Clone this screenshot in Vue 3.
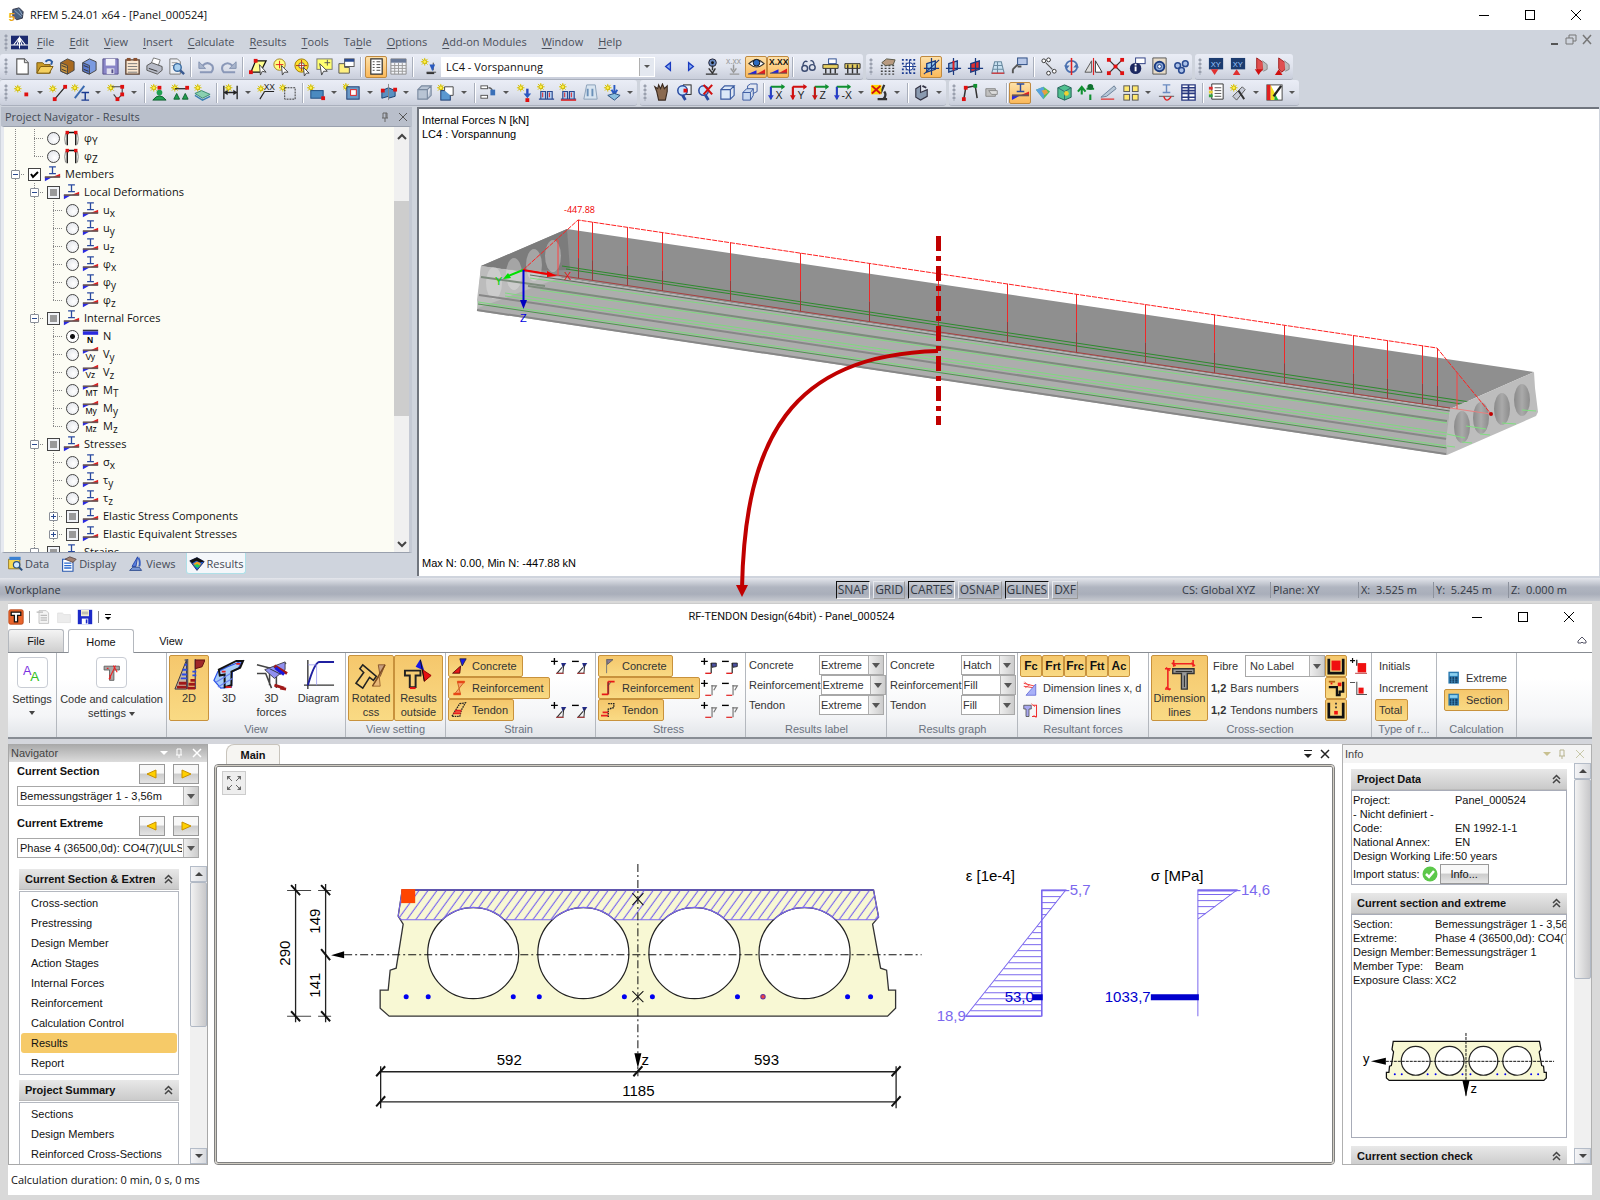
<script setup>
import { h, ref } from 'vue'

/* ---------- small drawing helpers for the icon set ---------- */
const P = (d, fill = 'none', stroke = 'none', w = 1) =>
  `<path d="${d}" fill="${fill}" stroke="${stroke}" stroke-width="${w}"/>`
const C = (x, y, r, fill, stroke = 'none', w = 1) =>
  `<circle cx="${x}" cy="${y}" r="${r}" fill="${fill}" stroke="${stroke}" stroke-width="${w}"/>`
const R = (x, y, w, hh, fill, stroke = 'none') =>
  `<rect x="${x}" y="${y}" width="${w}" height="${hh}" fill="${fill}" stroke="${stroke}"/>`
const T = (x, y, s, fill = '#222', size = 8, weight = 400) =>
  `<text x="${x}" y="${y}" font-size="${size}" font-weight="${weight}" fill="${fill}" font-family="Liberation Sans, sans-serif">${s}</text>`
const star = (x = 5, y = 5) =>
  P(`M${x - 4} ${y}H${x + 4}M${x} ${y - 4}V${y + 4}M${x - 3} ${y - 3}L${x + 3} ${y + 3}M${x + 3} ${y - 3}L${x - 3} ${y + 3}`, 'none', '#d9c400', 1) +
  C(x, y, 2, '#fff04a', '#c8b400')
const node = (x, y, c = '#e01010') => R(x - 2, y - 2, 4, 4, c)
const ibeam = (x, y, c = '#2a4aa0') => P(`M${x} ${y}h8M${x + 4} ${y}v8M${x} ${y + 8}h8`, 'none', c, 1.5)
const wedge = (y) => P(`M1 ${y}L10 ${y - 4}V${y}Z`, '#2222dd') + P(`M10 ${y}L19 ${y - 5}V${y}Z`, '#e02020') + P(`M1 ${y}H19`, 'none', '#555')
const member = ibeam(6, 1) + P('M1 13H10L1 18Z', '#2a2ae0') + P('M19 9V13H10Z', '#e02020') + P('M1 13H19', 'none', '#6a5555', 2)
const smallForce = (t) => P('M1 5H10L1 9Z', '#2a2ae0') + P('M19 1V5H10Z', '#e02020') + P('M1 5H19', 'none', '#6a5555', 2) + T(4, 17, t, '#000', 10)
const cabinet = (c, d) => P('M4 6L11 2L18 5V14L11 18L4 15Z', d, '#444') + P('M4 6L11 9V18L4 15Z', c, '#444') + P('M5 9l5 2M5 13l5 2', 'none', '#333')
const cube = (f, s) => P('M3 7H13V17H3ZM3 7L7 3H17L13 7M17 3V13L13 17', f, s, 1.2)
const load = P('M4 17V9H9V17M11 17V9H16V17M2 17H18', '#b8d0f0', '#2a4a90', 1.2) + P('M6 10v5M13 10v5', 'none', '#e02020')
const axes = (t, a, b) =>
  P('M3 4H17M3 4V17', 'none', a, 2) + P('M14 1l4 3l-4 3Z', a) + P('M0 13h6l-3 5Z', b) + P('M3 4V13', 'none', b, 2) + T(8, 17, t, '#222', 11)
const plane = (c, extra = '') =>
  P('M5 7L14 4V13L5 16Z', c, '#1a3a80', 1.4) + P('M10 1V19M2 12H18', 'none', '#1a3a80', 1.3) + extra
const xyz = (down) => R(2, 1, 15, 12, '#1c3c70') + T(4, 10, 'XY', '#9cc8ff', 8) + (down ? P('M4 13h8l-4 6Z', '#e03030') : P('M4 19h8l-4-6Z', '#e03030'))
const rebar = (up) => P('M6 1L13 6V13L9 16L6 12Z', '#e05050', '#a02020') + P('M12 4l5 4v5l-4 2', '#bbb', '#888') + (up ? P('M2 19h8l-4-6Z', '#d01010') : P('M4 13h8l-4 6Z', '#d01010'))

const icons = {
  new: P('M4 2H12L16 6V18H4Z', '#fff', '#555', 1.2) + P('M12 2V6H16', '#ddd', '#555'),
  open: P('M2 6H8L10 8H16V17H2Z', '#c89a28', '#7a5a10') + P('M2 17L6 10H19L15 17Z', '#f4d060', '#7a5a10') + P('M11 5q4-4 7 0l-1 3', 'none', '#2a5aa0', 2),
  cabA: cabinet('#d09a40', '#a86a20'), cabB: cabinet('#5a7ad0', '#7a9ae0'),
  save: P('M2 2H18V18H2Z', '#8a86c8', '#55508a') + R(5, 2, 10, 7, '#f2f2fa') + R(6, 12, 8, 6, '#e0e0ee') + R(11, 13, 2, 4, '#55508a'),
  clip: P('M3 3H17V18H3Z', '#fbe7d0', '#5a4030', 1.4) + P('M5 7h10M5 10h10M5 13h10M5 16h10', 'none', '#777') + R(4, 1, 4, 3, '#8a5030') + R(11, 1, 4, 3, '#8a5030'),
  print: P('M6 8L9 1L16 3L14 9Z', '#fff', '#777') + P('M2 9L7 6L18 10V14L13 18L2 14Z', '#b8bcc8', '#555') + P('M4 12l9 3', 'none', '#333'),
  preview: P('M3 2H11L14 5V18H3Z', '#eef0f4', '#777') + P('M5 6h6M5 9h5', 'none', '#999') + C(11, 11, 4, '#a8d0f0', '#3a6aa0', 1.5) + P('M14 14l4 4', 'none', '#3a5a90', 2.5),
  undo: P('M2 5V12H9Z', '#a8b4cc', '#8492b0') + P('M6 9Q11 4 16 9Q18 13 15 16H3', 'none', '#8a98b8', 2.2),
  redo: P('M18 5V12H11Z', '#a8b4cc', '#8492b0') + P('M14 9Q9 4 4 9Q2 13 5 16H17', 'none', '#8a98b8', 2.2),
  selArea: P('M7 4H18L12 16H2Z', '#ffff90', '#111', 1.3) + node(7, 4) + node(2, 16) + P('M11 8l7 8-4-1-2 4Z', '#fff', '#444'),
  selCirc: C(9, 8, 6, '#ffff80', '#a08020') + P('M5 8H13M9 4V12', 'none', '#e02020') + P('M11 9l7 7-4 0-2 3Z', '#fff', '#444'),
  selRing: C(9, 9, 7, '#ffe030', '#a08000') + C(9, 9, 3, '#fff', '#555') + P('M9 3V15M3 9H15', 'none', '#b03020') + P('M11 11l6 6-3 0-2 3Z', '#fff', '#444'),
  selRect: R(2, 2, 16, 11, '#ffff70', '#777') + P('M10 6h6M13 3v6', 'none', '#555') + P('M5 7l8 8-4 0-2 4Z', '#fff', '#444'),
  selWin: R(8, 2, 10, 8, '#fff', '#555') + R(8, 2, 10, 3, '#2a4a90') + P('M2 7H8V11H13V17H2Z', '#fff080', '#555'),
  navi: P('M4 2H16V18H4Z', '#fff', '#333', 1.3) + P('M6 5h2M6 8h2M6 11h2M6 14h2M10 5h4M10 8h4M10 11h4M10 14h4', 'none', '#444'),
  table: P('M2 2H18V18H2Z', '#f4f6fa', '#888') + R(2, 2, 16, 4, '#6a7a98') + P('M2 9h16M2 12h16M2 15h16M6 6v12M10 6v12M14 6v12', 'none', '#999'),
  newLoad: star(6, 5) + P('M8 16h10M15 6v8', 'none', '#444') + P('M11 8l3 7 3-7Z', '#2a5ac0') + R(8, 16, 8, 2, '#333'),
  prev: P('M12 6V14L7 10Z', '#8ab0f0', '#1a3ac0', 1.4), next: P('M8 6V14L13 10Z', '#8ab0f0', '#1a3ac0', 1.4),
  resEye: C(10, 6, 4, '#6a8ac0', '#223') + C(10, 6, 1.5, '#111') + P('M10 9v5M6 12l4 5 3-5M3 18h12', 'none', '#333', 1.5),
  xxGrey: T(1, 7, 'x.xx', '#999', 9) + P('M9 8v6M6 12l3 4 3-4M5 18h10', 'none', '#999', 1.5),
  eye: P('M2 7Q10-1 18 7Q10 14 2 7Z', '#fff', '#333', 1.2) + C(10, 6, 3.5, '#2a6ac0', '#111') + wedge(18),
  xx: T(0, 8, 'X.XX', '#111', 9, 700) + wedge(17),
  glasses: C(6, 12, 3, 'none', '#3a4a70', 1.5) + C(14, 11, 3, 'none', '#3a4a70', 1.5) + P('M4 9Q5 3 9 5M16 8Q15 3 12 4', 'none', '#3a4a70', 1.4),
  lt1: R(8, 2, 8, 5, '#fff', '#2a4a90') + P('M2 8H18V12H2Z', '#e8d060', '#333') + P('M5 12v5M10 12v5M15 12v5M2 18h16', 'none', '#333', 1.5),
  lt2: P('M2 7H18V12H2Z', '#e8d060', '#333') + P('M5 8v9M10 8v9M15 8v9M2 18h16', 'none', '#333', 1.5),
  gridHand: P('M3 9H18M3 12H18M3 15H18M3 18H18', 'none', '#444', 1.5).replace('/>', ' stroke-dasharray="2 2"/>') + P('M4 6L9 2L18 3L16 8L8 9Z', '#b89a80', '#554'),
  gridDots: P('M2 3H18M2 7H18M2 13H18M2 17H18', 'none', '#1a3a90', 2).replace('/>', ' stroke-dasharray="2 2"/>') + C(10, 10, 4, '#fff', '#1a3a90') + P('M10 3v14M3 10h14', 'none', '#1a3a90'),
  pl1: plane('#9cd0f0', P('M2 18L18 3', 'none', '#1a3a80', 1.2)), pl2: plane('#8ab8e0', P('M10 4v10', 'none', '#e02020', 2)), pl3: plane('#e03030'),
  gridBent: P('M4 17L7 5H14L17 17ZM5 13h11M6 9h9M10 5v12', '#c8e0f0', '#6a8aa0', 1.1) + P('M4 17h13', 'none', '#e02020', 1.2),
  probe: R(8, 1, 10, 7, '#b8c8e8', '#2a4a80') + P('M8 8L3 13M3 13v4M8 10l4 0', 'none', '#555', 2),
  copyN: C(4, 4, 2, '#fff', '#333') + C(9, 3, 2, '#fff', '#333') + C(15, 15, 2, '#fff', '#333') + C(9, 17, 2, '#fff', '#333') + P('M6 6l7 7', 'none', '#555', 1.2),
  rotate: C(10, 10, 6, 'none', '#4a70b0', 1.8) + P('M10 1V19', 'none', '#e02020', 1.6) + P('M2 9l3 4 3-4ZM12 11l3-4 3 4Z', '#4a70b0'),
  mirror: P('M8 4V16H1Z', '#ddd', '#555') + P('M12 4V16H19Z', '#fff', '#333') + P('M10 1V19', 'none', '#e02020', 1.2),
  cut: P('M3 3L17 17M17 3L3 17', 'none', '#333', 1.4) + node(3, 3) + node(17, 3) + node(3, 17) + node(17, 17) + node(10, 10),
  info: R(8, 1, 10, 6, '#fff', '#2a3a80') + C(8, 12, 6, '#1c2860') + P('M8 10v5M8 7v2', 'none', '#fff', 2),
  gear: P('M3 1H17V18H3Z', '#e8dcc8', '#555') + C(10, 10, 5, '#8aa8d8', '#1a3a80', 2) + C(10, 10, 2, '#fff', '#1a3a80'),
  gears: C(6, 9, 3, '#aac0e8', '#2a4a90', 1.6) + C(14, 7, 3, '#aac0e8', '#2a4a90', 1.6) + C(10, 14, 3, '#aac0e8', '#2a4a90', 1.6),
  xy1: xyz(true), xy2: xyz(false), rb1: rebar(false), rb2: rebar(true),
  nNode: star(5, 6) + node(14, 12), nLine: star(4, 6) + P('M6 17L17 4', 'none', '#222', 1.3) + node(6, 17) + node(17, 4),
  nMember: star(4, 5) + P('M4 16L14 3', 'none', '#3a6ab0', 2) + ibeam(11, 10, '#1a3a90'),
  nPoly: star(4, 5) + P('M5 4H16V12L11 17L7 12', 'none', '#444', 1.2) + node(16, 4) + node(16, 12) + node(11, 17),
  supN: star(5, 5) + node(11, 5) + C(11, 10, 3, '#20a050') + P('M4 18Q11 9 18 18Z', '#20a050', '#106030'),
  supL: star(4, 5) + P('M4 6H17', 'none', '#333', 1.4) + node(17, 5) + P('M3 17l3-6 3 6ZM12 17l3-6 3 6Z', '#20a050', '#106030'),
  supS: star(5, 5) + P('M2 11L9 8L18 12L10 16Z', '#8ad0b0', '#3a8a70') + P('M2 13L10 18L18 14', 'none', '#3a80b0', 1.5),
  dim: P('M3 3V17M17 3V17M3 10H17', 'none', '#222', 1.4) + P('M3 10l4-3v6ZM17 10l-4-3v6Z', '#222') + star(8, 5),
  dimXX: star(4, 6) + T(7, 7, 'XX', '#222', 9) + P('M8 9H18M8 9L3 17', 'none', '#222', 1.2),
  dimGrid: star(4, 5) + P('M6 5H17V17H6Z', 'none', '#333', 1).replace('/>', ' stroke-dasharray="2 1"/>'),
  surf: star(4, 5) + R(4, 8, 13, 8, '#4a8ac0', '#1a4a80') + node(17, 16),
  surfH: star(3, 4) + R(4, 4, 13, 13, '#6a9ac8', '#1a3a70') + R(8, 7, 6, 6, '#fff', '#e02020'),
  surfR: P('M3 8L10 5V14L3 16ZM10 5L17 8V14L10 16Z', '#5a90c0', '#1a4070') + node(4, 8) + node(17, 7) + P('M10 1v17', 'none', '#888'),
  solidG: cube('#b8c4d4', '#7a8aa0'), solid: star(4, 5) + R(4, 8, 10, 10, '#5a98d0', '#1a3a70') + P('M8 8V4h9v9h-3', '#fff', '#444'),
  conn: R(2, 3, 7, 3, '#fff', '#555') + R(2, 13, 7, 3, '#fff', '#555') + P('M10 5Q15 5 14 12', 'none', '#555', 1.4) + R(12, 7, 5, 6, '#3a70b8'),
  ld1: star(6, 5) + P('M13 6v8', 'none', '#2a4ac0', 2.5) + P('M9 11h8l-4 5Z', '#2a5ac0') + node(13, 18),
  ld2: star(4, 4) + load, ld3: star(4, 4) + load + P('M2 18h16', 'none', '#e02020', 1.5),
  ld4: P('M6 2H15L17 17H3Z', '#d8e4f0', '#8aa0b8') + P('M7 6v8M12 6v8', 'none', '#6a90b8', 2),
  ld5: star(5, 5) + P('M12 2v8M9 7l3 5 3-5', 'none', '#2a5ac0', 2) + P('M5 13L12 11L18 13L12 18Z', '#8ac0e0', '#2a5080'),
  hand: P('M5 9L3 4L6 6L7 2L9 6L11 1L13 6L16 3L16 9L14 18H7Z', '#8a6a50', '#3a2a20', 1.2),
  zoomW: R(10, 2, 8, 10, '#eef4fc', '#222') + C(9, 8, 5, '#c8e4ff', '#2a4aa0', 1.6) + P('M9 13L12 18', 'none', '#2a4aa0', 3) + node(12, 8),
  zoomX: C(8, 8, 5, '#c8e4ff', '#2a4aa0', 1.6) + P('M10 13L13 18', 'none', '#2a4aa0', 3) + P('M8 2l9 10M17 2l-9 10', 'none', '#d01010', 2.2),
  box: cube('#dce8f8', '#3a5aa0'), boxes: P('M3 10H11V18H3ZM3 10L7 6H14L11 10M14 6V13L11 18', '#c8d8f0', '#3a5aa0') + P('M8 6V3L11 1H18V9L14 11', 'none', '#3a5aa0'),
  axX: axes('X', '#109030', '#2a3ad0'), axY: axes('Y', '#d01010', '#d01010'), axZ: axes('Z', '#109030', '#d01010'), axMX: axes('-X', '#109030', '#2a3ad0'),
  micro: P('M15 2l-4 9M8 17H18M15 9Q18 13 14 17', 'none', '#333', 2.4) + R(1, 2, 11, 10, '#ffd800') + P('M2 3l9 8M11 3l-9 8', 'none', '#d01010', 2),
  bulk: P('M4 6L9 3V10L16 7V14L9 18L4 15Z', '#8a9ab0', '#334', 1.2) + P('M11 3l4 2', 'none', '#334', 2),
  frame: P('M3 17L5 5L15 3L17 16', 'none', '#333', 1.6) + node(5, 5) + node(15, 3, '#109030') + node(3, 17),
  grip: P('M3 6H13V14H3Z', '#c0c0c0', '#888') + P('M6 8h9v4H9Z', '#ddd', '#888'),
  resM: member, resS: P('M3 7L11 4L18 9L11 17Z', '#50c060') + P('M3 7L11 4L12 10L11 17Z', '#5aa0e0') + P('M9 8l5-1 2 3-4 3Z', '#e8a040'),
  resSo: P('M3 5L10 2L17 5V15L10 18L3 15Z', '#50c090', '#206050') + P('M10 9v9M3 5l7 4 7-4', 'none', '#306a70') + C(12, 11, 2.5, '#f0d030'),
  resSup: P('M5 4v8M1 9l4-5 4 5M10 6h8M14 12v6', 'none', '#109030', 2.2) + C(14, 4, 3, '#107030'),
  resSec: P('M2 15L16 3L18 6L8 14Z', '#b8c8d8', '#6a8098') + P('M2 17H16', 'none', '#e05050', 1.6),
  quad: R(3, 3, 6, 6, '#ffe870', '#555') + R(12, 3, 6, 6, '#ffe870', '#555') + R(3, 12, 6, 6, '#ffe870', '#555') + R(12, 12, 6, 6, '#ffe870', '#555'),
  resI: ibeam(6, 2, '#6a8ac0') + P('M2 14H18', 'none', '#555') + P('M7 14q3 8 8 0', 'none', '#e02020', 1.4),
  tabs: P('M3 2H17V18H3Z', '#fff', '#2a3a80', 1.4) + P('M3 5h14M3 8h14M3 11h14M3 15h14M10 2v16', 'none', '#2a3a80', 1.8),
  rep: P('M5 1H17V17H5Z', '#fff', '#333') + P('M8 5h7M8 8h7M8 11h7M8 14h7', 'none', '#555') + R(2, 4, 4, 3, '#e03030') + R(2, 8, 4, 3, '#e8d030') + R(2, 12, 4, 3, '#30a040'),
  wand: star(5, 5) + P('M4 14L14 4l3 3L8 18Z', '#c8ccd8', '#555') + P('M10 8l6 9', 'none', '#333', 2),
  color: R(2, 2, 16, 16, '#fff', '#444') + P('M2 2H6V18H2Z', '#e02020') + P('M6 2L10 10V18H6Z', '#f0e020') + P('M10 10l4 8h-4Z', '#20b040') + P('M17 3L9 14', 'none', '#222', 2.4),
  defo: P('M5 3H15V18M5 3V18', 'none', '#111', 1.6) + P('M3 4Q1 10 3 17M17 4Q19 10 17 17', 'none', '#777') + node(5, 3) + node(15, 3),
  member,
  fN: R(1, 2, 18, 2, '#334') + R(1, 4, 18, 4, '#2a2ae0') + T(6, 18, 'N', '#000', 10, 700),
  fVy: smallForce('Vy'), fVz: smallForce('Vz'), fMT: smallForce('MT'), fMy: smallForce('My'), fMz: smallForce('Mz'),
  tData: P('M2 4H16V16H2Z', '#f8d850', '#8a6a10') + R(3, 1, 14, 4, '#3a80d0') + C(12, 11, 4, '#d0e8ff', '#2a5080', 1.5) + P('M15 14l4 4', 'none', '#2a5080', 2.5),
  tDisp: P('M2 4H15V19H2Z', '#fff', '#2a5ab0', 1.4) + P('M4 9h9M4 12h9M4 15h9', 'none', '#2a6ad0', 1.6) + P('M5 4L11 1L19 4L15 8Z', '#a08070', '#544'),
  tViews: P('M12 1L5 13H10Z', '#5a80e0', '#1a3aa0') + P('M13 2q3 6 1 11', 'none', '#3a60c0', 2.4) + P('M2 18H17L14 14H6Z', '#7a98d8', '#1a3a80'),
  tRes: P('M1 6L10 2L19 7L10 18Z', '#2060e0', '#224') + P('M1 6L10 2L19 7L14 8L9 6L4 9Z', '#111') + P('M5 10L10 7L15 9L13 13L9 12Z', '#f0a020') + P('M6 12L10 10L14 12L11 15Z', '#20d060'),
  logo: P('M6 3L14 1L19 6L18 14L11 16L6 12Z', '#4a6080', '#223') + P('M8 4l9 8M13 2l5 8', 'none', '#a0b8d0') + T(1, 18, '5', '#e8a818', 14, 700),
  bridge: R(0, 2, 20, 16, '#1c2a70') + P('M0 13H20M10 3V17M3 13L10 4L17 13M7 13L10 5L13 13', 'none', '#fff', 1.2),
  tee: `<rect x="1" y="1" width="18" height="18" rx="2" fill="#e8642c" stroke="#b04010"/>` + P('M4 4H16V8H12V16H8V8H4Z', '#fff', '#111', 1.6),
  page: P('M5 2H14L17 5V18H5Z', '#f4f4f4', '#bbb') + P('M2 4h8M7 8h8M7 11h8M7 14h8', 'none', '#bbb', 1.5),
  folder: P('M2 5H8L10 7H18V17H2Z', '#ececec', '#e0e0e0'),
  disk: P('M1 1H19V19H1Z', '#1c2ac8') + R(5, 1, 10, 8, '#f4f0d0') + R(6, 12, 8, 7, '#fff') + R(11, 13, 2, 5, '#1c2ac8') + P('M6 4h8M6 6h8', 'none', '#999'),
  aa: T(0, 12, 'A', '#7a30e0', 14) + T(8, 19, 'A', '#30c020', 15),
  sC: P('M11 1H19L14 10Z', '#1a1ae8', '#223') + P('M12 10L11 19H2Z', '#e81818', '#400'),
  sR: P('M8 2H17L4 18H12Z', '#f8a070', '#c05010') + R(8, 1, 9, 3, '#e84818') + R(3, 16, 9, 3, '#e84818'),
  sT: P('M11 2L18 1L13 10L11 18H1Z', 'none', '#222', 1.6).replace('/>', ' stroke-dasharray="2 1"/>') + P('M5 11h8M3 14h9', 'none', '#e82020', 2.4),
  tC: P('M7 2H15L8 8Z', '#8a7a98', '#555') + P('M7 2V19', 'none', '#777', 1.2),
  tR: P('M9 2H17M9 2V18M1 18H9', 'none', '#e81818', 2.4) + P('M9 3V17M12 3l-3 4', 'none', '#444', 1),
  tT: P('M9 2H16V7L9 9V19', 'none', '#222', 1.8).replace('/>', ' stroke-dasharray="2 1"/>') + P('M2 13H9M0 17H9', 'none', '#e82020', 2.4),
  pS: P('M0 4H8M4 0V8', 'none', '#000', 1.6) + P('M12 6H18L14 12Z', '#222a88') + P('M13 11L7 18H14L15 8', 'none', '#333', 1.2) + P('M6 18H15', 'none', '#c03030'),
  mS: P('M0 4H8', 'none', '#000', 1.6) + P('M12 6H18L14 12Z', '#222a88') + P('M13 11L7 18H14L15 8', 'none', '#333', 1.2) + P('M6 18H15', 'none', '#c03030'),
  pT: P('M0 4H8M4 0V8', 'none', '#000', 1.6) + P('M12 6H18V10L13 11Z', '#4a50a0', '#222') + P('M12 6V18', 'none', '#222', 1.4) + P('M5 18H12', 'none', '#e02020', 1.6),
  mT: P('M0 4H8', 'none', '#000', 1.6) + P('M12 6H18V10L13 11Z', '#4a50a0', '#222') + P('M12 6V18', 'none', '#222', 1.4) + P('M5 18H12', 'none', '#e02020', 1.6),
  pE: P('M0 4H8M4 0V8', 'none', '#000', 1.6) + P('M12 7H18L15 12M13 6V18', 'none', '#777', 1.4) + P('M5 18H12', 'none', '#e02020', 1.4),
  mE: P('M0 4H8', 'none', '#000', 1.6) + P('M12 7H18L15 12M13 6V18', 'none', '#777', 1.4) + P('M5 18H12', 'none', '#e02020', 1.4),
  dxd: P('M1 3L16 7M1 7L14 9', 'none', '#f03030', 1.2) + P('M17 4V19H4Z', '#a8b0f8', '#5a60d0') + P('M2 1l4 4M3 9l6-4', 'none', '#f03030'),
  dln: P('M1 3H11V8H8V18H4V8H1Z', '#a8a8f0', '#444') + P('M13 3H18V18H12', 'none', '#f03030', 1.4) + P('M11 1l5 4M14 16l4 4', 'none', '#f03030'),
  u1: P('M2 2V18H18V2', 'none', '#111', 3) + R(5, 4, 10, 11, '#f01010'),
  u2: P('M2 9H11V18H14V14H18V3', 'none', '#111', 2.5) + P('M2 3H9', 'none', '#b06010', 2) + R(12, 4, 4, 4, '#f01010') + P('M4 5h2', 'none', '#f01010', 2),
  u3: P('M2 2V18H18V2', 'none', '#111', 3) + R(8, 11, 4, 4, '#f01010') + P('M10 2v7', 'none', '#333', 2).replace('/>', ' stroke-dasharray="2 2"/>'),
  sq1: P('M0 3H6M3 0V6M8 2V9', 'none', '#111', 1.4) + R(9, 6, 10, 11, '#f01010') + P('M6 18H20', 'none', '#b02020'),
  sq2: P('M0 3H6M8 2V17H20', 'none', '#555', 1.3) + R(10, 9, 6, 7, '#f01010'),
  calc: R(2, 1, 15, 17, '#2a7ab0') + R(4, 3, 11, 4, '#8ad0f0') + P('M4 10h11M4 13h11M4 16h11', 'none', '#103050', 1.8) + P('M7 8v10M11 8v10', 'none', '#5ab0e0')
}
const big = {
  code: P('M2 4H30V11H20V30H12V11H2Z', '#a8a8a8', '#555', 1.5) + P('M23 3L11 28M19 3L26 15M7 8h3M13 28q2-4-1-8', 'none', '#f02020', 2),
  d2: P('M14 1L2 31H14Z', '#c8b8a0', '#334', 1) + P('M4 29H14M6 25H14', 'none', '#a01818', 3) + P('M12 6H15M10 11H15M9 16H15M8 20H15', 'none', '#2a4ae8', 2) + P('M15 0V31M12 1H15M23 0V31', 'none', '#556', 1.5) + P('M23 1H33L30 8L23 10Z', '#a02828', '#601010') + P('M18 22H23M16 26H23M15 30H23', 'none', '#a01818', 3) + P('M20 17H24M20 13H24', 'none', '#2a4ae8', 1.8),
  d3: P('M5 13L15 8L30 2L26 10L20 13L19 29L8 30L1 22Z', '#a8ccf8', '#2a50e8', 1.3) + P('M6 11L24 2H31L28 9L19 13V27L12 29V16L7 17Z', 'none', '#111', 2) + P('M3 24L18 15M5 29L20 20', 'none', '#6a80f0', 1.2) + P('M9 13h4M24 5h4M13 29h6', 'none', '#e02020', 2),
  d3f: P('M1 6L13 9H24L31 4M1 15H10L16 30M14 12V27M21 18V30', 'none', '#444', 1.6) + P('M9 11L30 3V11L19 20Z', '#9090f0', '#445') + P('M14 10L26 16M18 8L25 14', 'none', '#334', 1) + P('M19 7l13 8M19 27l10 3M25 30l6 1', 'none', '#a01818', 3) + P('M20 9l9 7', 'none', '#1818e0', 3),
  dia: P('M5 1V31M1 27H32', 'none', '#333', 1.4) + P('M5 27Q12 3 17 3H32', 'none', '#2020a0', 2) + P('M5 6H14V27', 'none', '#99e', 0.8),
  rot: P('M8 6L22 18L19 22L15 19L8 30L1 25L9 14L5 10Z', 'none', '#222', 1.6) + P('M31 6H24L26 18Z', '#c8a080', '#8a5a30') + P('M25 18L26 28H18Z', '#e8b878', '#a06a30') + P('M31 6L18 28', 'none', '#7a4a20', 1.4),
  out: P('M2 12H18V17H13V29H7V17H2Z', 'none', '#222', 2) + P('M18 0L22 12L13 8Z', '#1818e8') + P('M20 11L29 17L22 23Z', '#e81010', '#900') + P('M7 30h6', 'none', '#e81010', 2) + P('M18 1L22 23', 'none', '#111', 1),
  dims: P('M9 10H31V15H24V31H18V15H9Z', '#999', '#333', 1.4) + P('M10 5H30M10 1V8M30 1V8M4 10V31M1 10H7M1 31H7', 'none', '#f02020', 1.6) + P('M8 4l4 3M28 4l4 3M2 29l4 3M2 9l4 3', 'none', '#f02020', 1.6) + P('M21 17V29M12 13H29', 'none', '#222', 1)
}
const Icon = ({ n, s = 20 }) =>
  h('svg', { viewBox: big[n] ? '0 0 33 33' : '0 0 20 20', width: s, height: s, 'aria-hidden': 'true', class: 'ico', innerHTML: big[n] || icons[n] })
Icon.props = ['n', 's']

/* ---------- upper window ---------- */
const menu = ['File', 'Edit', 'View', 'Insert', 'Calculate', 'Results', 'Tools', 'Table', 'Options', 'Add-on Modules', 'Window', 'Help']
const underline = { Table: 2 }
const parts = (m) => {
  const i = underline[m] || 0
  return [m.slice(0, i), m[i], m.slice(i + 1)]
}
const rowOneA = 'new open cabA cabB save clip print preview | undo redo | selArea selCirc selRing selRect selWin | navi* table | newLoad'.split(' ')
const rowOneB = 'prev next resEye xxGrey eye* xx* | glasses lt1 lt2'.split(' ')
const rowOneRest = ['gridHand gridDots pl1* pl2 pl3 gridBent probe | copyN rotate mirror cut info gear gears', 'xy1 xy2 rb1 rb2'].map((s) => s.split(' '))
const rowTwo = [
  'nNode v nLine nMember v nPoly v | supN supL supS | dim v dimXX dimGrid | surf v surfH v surfR v solidG solid v | conn v ld1 ld2 ld3 ld4 ld5 v',
  'hand zoomW zoomX box boxes | axX axY axZ axMX v micro v | bulk v',
  'frame grip | resM* resS resSo resSup resSec quad v resI tabs | rep wand v color v'
].map((s) => s.split(' '))
const Tool = ({ t }) => {
  if (t === '|') return h('i', { class: 'tsep' })
  if (t === 'v') return h('button', { class: 'tdrop', 'aria-label': 'More' })
  const on = t.endsWith('*')
  const n = on ? t.slice(0, -1) : t
  return h('button', { class: ['tbtn', { lit: on }], 'aria-label': n }, [h(Icon, { n, s: 19 })])
}
Tool.props = ['t']

const force = ref('N')
const rad = (text, sub, icon, c = 't') => ({ g: 'vv', c, k: 'radio', text, sub, icon })
const tree = [
  { g: 'v', c: 't', k: 'radio', text: 'φ', sub: 'Y', icon: 'defo' },
  { g: 'v', c: 'l', k: 'radio', text: 'φ', sub: 'Z', icon: 'defo' },
  { g: '', c: 'm', k: 'check', text: 'Members', icon: 'member' },
  { g: 'v', c: 'm', k: 'part', text: 'Local Deformations', icon: 'member' },
  rad('u', 'x', 'member'), rad('u', 'y', 'member'), rad('u', 'z', 'member'),
  rad('φ', 'x', 'member'), rad('φ', 'y', 'member'), rad('φ', 'z', 'member', 'l'),
  { g: 'v', c: 'm', k: 'part', text: 'Internal Forces', icon: 'member' },
  rad('N', '', 'fN'), rad('V', 'y', 'fVy'), rad('V', 'z', 'fVz'), rad('M', 'T', 'fMT'), rad('M', 'y', 'fMy'), rad('M', 'z', 'fMz', 'l'),
  { g: 'v', c: 'm', k: 'part', text: 'Stresses', icon: 'member' },
  rad('σ', 'x', 'member'), rad('τ', 'y', 'member'), rad('τ', 'z', 'member'),
  { g: 'vv', c: 'p', k: 'part', text: 'Elastic Stress Components', icon: 'member' },
  { g: 'vv', c: 'p', k: 'part', text: 'Elastic Equivalent Stresses', icon: 'member' },
  { g: 'v', c: 'm', k: 'part', text: 'Strains', icon: 'member' }
]
const navTabs = [['tData', 'Data'], ['tDisp', 'Display'], ['tViews', 'Views'], ['tRes', 'Results']]
const snaps = [['SNAP', 1], ['GRID', 0], ['CARTES', 1], ['OSNAP', 0], ['GLINES', 1], ['DXF', 0]]

/* ordinates of the normal force diagram along the member */
const ordinates = [578, 592, 627, 662, 730, 800, 869, 938, 1007, 1076, 1145, 1214, 1284, 1353, 1387, 1422, 1437].map((x) => ({
  x, top: 220 + (x - 578) * 0.149, bottom: 270 + (x - 523) * 0.1488
}))
const endHoles = [[1462, 427], [1481, 418], [1502, 409], [1522, 400]]
const startHoles = [[494, 283], [514, 274], [534, 265], [553, 256]]

/* ---------- lower window ---------- */
const sections = [['Cross-section', 'Prestressing', 'Design Member', 'Action Stages', 'Internal Forces', 'Reinforcement', 'Calculation Control', 'Results', 'Report'], ['Sections', 'Design Members', 'Reinforced Cross-Sections']]
const resultRows = ['Concrete', 'Reinforcement', 'Tendon']
const labelGroups = [{ name: 'Results label', c: 'wide', v: ['Extreme', 'Extreme', 'Extreme'] }, { name: 'Results graph', c: 'slim', v: ['Hatch', 'Fill', 'Fill'] }]
const kindGroups = [
  { name: 'Strain', i: ['sC', 'sR', 'sT'], pm: [['pS', 'mS'], [], ['pS', 'mS']] },
  { name: 'Stress', i: ['tC', 'tR', 'tT'], pm: [['pT', 'mT'], ['pE', 'mE'], ['pE', 'mE']] }
]
const project = [['Project:', 'Panel_000524'], ['- Nicht definiert -', ''], ['Code:', 'EN 1992-1-1'], ['National Annex:', 'EN'], ['Design Working Life:', '50 years']]
const current = [['Section:', 'Bemessungsträger 1 - 3,56m'], ['Extreme:', 'Phase 4 (36500,0d): CO4(7)(ULS)'], ['Design Member:', 'Bemessungsträger 1'], ['Member Type:', 'Beam'], ['Exposure Class:', 'XC2']]

const outline = 'M402 889L398 915L403 923L396 967L390 969L388 989H380V1007L389 1015H887L895 1007V989H888L886 969L880 967L872 923L878 916L873 889Z'
const cores = [473, 583, 694, 804]
const strands = [406, 428, 513, 539, 624, 652, 737, 847, 870]
const strainLines = Array.from({ length: 20 }, (_, i) => 895 + i * 6).map((y) => ({ y, x: 1065 - ((y - 889) * 100) / 126 }))
const stressLines = [893, 899, 905, 912].map((y) => ({ y, x: 1238 - ((y - 889) * 39) / 29 }))
</script>

<template>
  <div class="page">
    <!-- modelling window -->
    <section class="rfem">
      <header class="title">
        <Icon n="logo" :s="16" />
        <h1>RFEM 5.24.01 x64 - [Panel_000524]</h1>
        <div class="wctl">
          <button aria-label="Minimize"><svg width="12" height="12"><path d="M1 6.5H11" stroke="#000" /></svg></button>
          <button aria-label="Maximize"><svg width="12" height="12"><rect x="1.5" y="1.5" width="9" height="9" fill="none" stroke="#000" /></svg></button>
          <button aria-label="Close"><svg width="12" height="12"><path d="M1 1L11 11M11 1L1 11" stroke="#000" /></svg></button>
        </div>
      </header>
      <nav class="menu">
        <i class="grip"></i>
        <Icon n="bridge" :s="17" />
        <a v-for="m in menu" :key="m" href="#">{{ parts(m)[0] }}<u>{{ parts(m)[1] }}</u>{{ parts(m)[2] }}</a>
        <div class="mdi">
          <svg width="42" height="12"><path d="M1 10H8" stroke="#555" stroke-width="2" /><path d="M19 4V1H26V7H23M16 4H23V10H16Z" fill="none" stroke="#777" /><path d="M33 1L41 10M41 1L33 10" stroke="#777" stroke-width="1.5" /></svg>
        </div>
      </nav>
      <div class="toolrow">
        <div class="bar">
          <i class="grip"></i>
          <Tool v-for="(t, i) in rowOneA" :key="i" :t="t" />
          <span class="combo lc">
            <select aria-label="Load case"><option>LC4 - Vorspannung</option></select><i></i>
          </span>
          <Tool v-for="(t, i) in rowOneB" :key="'b' + i" :t="t" />
        </div>
        <div v-for="(g, k) in rowOneRest" :key="k" class="bar">
          <i class="grip"></i><Tool v-for="(t, i) in g" :key="i" :t="t" />
        </div>
      </div>
      <div class="toolrow second">
        <div v-for="(g, k) in rowTwo" :key="k" class="bar">
          <i class="grip"></i><Tool v-for="(t, i) in g" :key="i" :t="t" />
        </div>
      </div>

      <div class="work">
        <aside class="project">
          <header>
            <h2>Project Navigator - Results</h2>
            <button aria-label="Pin"><svg width="10" height="10"><path d="M2 6H8M3 6V1H7V6M6 1V6M5 6V10" fill="none" stroke="#666" /></svg></button>
            <button aria-label="Close navigator"><svg width="10" height="10"><path d="M1 1L9 9M9 1L1 9" stroke="#555" /></svg></button>
          </header>
          <div class="treebox">
            <div class="tree">
              <div v-for="(r, i) in tree" :key="i" class="node">
                <i v-for="(c, j) in r.g" :key="j" class="cell full"></i>
                <i class="cell" :class="r.c === 'l' ? 'last' : 'full'"><b class="arm"></b><b v-if="r.c === 'm' || r.c === 'p'" class="exp" :class="r.c"></b></i>
                <label>
                  <span class="ctl">
                    <input v-if="r.k === 'radio'" v-model="force" type="radio" name="result" :value="r.icon === 'fN' ? 'N' : i" />
                    <input v-else type="checkbox" :class="r.k" :checked="r.k === 'check'" />
                  </span>
                  <Icon :n="r.icon" :s="17" />
                  <span class="txt">{{ r.text }}<small v-if="r.sub">{{ r.sub }}</small></span>
                </label>
              </div>
            </div>
            <div class="vscroll">
              <svg width="10" height="8"><path d="M1 6L5 2L9 6" fill="none" stroke="#444" stroke-width="2" /></svg>
              <div class="thumb"></div>
              <svg width="10" height="8"><path d="M1 2L5 6L9 2" fill="none" stroke="#444" stroke-width="2" /></svg>
            </div>
          </div>
          <footer>
            <button v-for="t in navTabs" :key="t[1]" :class="{ cur: t[1] === 'Results' }"><Icon :n="t[0]" :s="16" />{{ t[1] }}</button>
          </footer>
        </aside>

        <main class="view">
          <svg viewBox="419 109 1180 467">
            <g class="vtext">
              <text x="422" y="124">Internal Forces N [kN]</text>
              <text x="422" y="138">LC4 : Vorspannung</text>
              <text x="422" y="567">Max N: 0.00, Min N: -447.88 kN</text>
            </g>
            <!-- hollow core slab -->
            <path d="M481 266L567 229L1534 372L1450 409Z" fill="#8f8f8f" />
            <path d="M481 266L567 229L570 270L523 271Z" fill="#7c7c7c" />
            <path d="M481 266L1450 409L1447 455L477 311Z" fill="#adadad" />
            <path d="M481 266L523 272L562 277L540 285L478 308L477 300Z" fill="#bcbcbc" />
            <ellipse v-for="e in startHoles" :key="e[0]" :cx="e[0]" :cy="e[1]" rx="8" ry="16" fill="#e8e8e8" fill-opacity=".38" />
            <g stroke-width="1" fill="none">
              <path d="M562 266L1470 402M566 269L1468 405" stroke="#2d8a2d" />
              <path d="M530 278L1450 414M540 290L1447 423M505 293L1447 433M505 296L1447 436M478 302L1447 446" stroke="#7fd97f" />
              <path d="M530 275L1450 411" stroke="#5c6b5c" stroke-width="1" />
              <path d="M528 286L1447 421M481 277L545 286" stroke="#7d8b7d" stroke-width="2" />
              <path d="M479 295L1447 439M477 310L1446 454" stroke="#878787" stroke-width="2" />
              <path d="M478 304L1447 448" stroke="#4c954c" />
            </g>
            <path d="M1450 409L1534 372L1535 388L1538 412L1536 416L1447 455L1446 440Z" fill="#bdbdbd" />
            <ellipse v-for="e in endHoles" :key="e[0]" :cx="e[0]" :cy="e[1]" rx="8" ry="16" fill="url(#core)" />
            <path d="M1447 446l8 1M1462 442l10 1M1480 434l10 1M1502 423l14 1M1522 410l14 1M1447 434l18 4M1466 426l20 3" stroke="#7fe07f" />
            <defs>
              <linearGradient id="core"><stop offset="0" stop-color="#8a8a8a" /><stop offset=".5" stop-color="#aaa" /><stop offset="1" stop-color="#8c8c8c" /></linearGradient>
            </defs>
            <!-- normal force diagram -->
            <path d="M523 270L578 220L1437 348L1491 414" fill="none" stroke="#ff2020" stroke-dasharray="5 1" />
            <path d="M523 270L1450 408" stroke="#a84040" /><path d="M1450 408L1491 414" stroke="#e88080" />
            <path d="M558 240V276M1457 373V409" stroke="#ff4040" />
            <g v-for="o in ordinates" :key="o.x">
              <path :d="`M${o.x}.5 ${o.top}V${o.bottom - 20}`" stroke="#f02828" />
              <path :d="`M${o.x}.5 ${o.bottom - 20}V${o.bottom}`" stroke="#9c3838" />
            </g>
            <text x="564" y="213" class="peak">-447.88</text>
            <circle cx="1491" cy="414" r="2" fill="#c00000" />
            <path d="M523 270L547 274" stroke="#f00000" stroke-width="2" /><path d="M557 276L547 271V277Z" fill="#f00000" />
            <path d="M523 270L508 276" stroke="#00e000" stroke-width="2" /><path d="M503 279L508 273L511 278Z" fill="#00e000" />
            <path d="M523.5 270V302" stroke="#0000d8" stroke-width="2" /><path d="M520 300H527L523.5 309Z" fill="#0000c0" />
            <g class="axis"><text x="564" y="280" fill="#e02020">X</text><text x="495" y="285" fill="#00d000">Y</text><text x="520" y="322" fill="#0000e0">Z</text></g>
            <!-- section callout -->
            <path d="M938.500 236V425" stroke="#c00000" stroke-width="5" stroke-dasharray="15 5 5 5" />
            <path d="M938 351C790 355 745 440 742 588" fill="none" stroke="#c00000" stroke-width="4" />
            <path d="M736 585H748L742 597Z" fill="#c00000" />
          </svg>
        </main>
      </div>

      <footer class="status">
        <span class="wp">Workplane</span>
        <button v-for="s in snaps" :key="s[0]" :class="{ down: s[1] }">{{ s[0] }}</button>
        <span class="cs">CS: Global XYZ</span>
        <span class="pl">Plane: XY</span>
        <span class="xy">X:&nbsp; 3.525 m</span>
        <span class="xy">Y:&nbsp; 5.245 m</span>
        <span class="zz">Z:&nbsp; 0.000 m</span>
      </footer>
    </section>

    <!-- design window -->
    <section class="tendon">
      <header class="ttitle">
        <div class="quick">
          <Icon n="tee" :s="16" /><i></i>
          <button aria-label="New"><Icon n="page" :s="16" /></button>
          <button aria-label="Open"><Icon n="folder" :s="16" /></button>
          <button aria-label="Save"><Icon n="disk" :s="16" /></button><i></i>
          <button aria-label="Customize"><svg width="8" height="8"><path d="M1 1.5H7" stroke="#000" /><path d="M1 4H7L4 7Z" /></svg></button>
        </div>
        <h1>RF-TENDON Design(64bit) - Panel_000524</h1>
        <div class="wctl">
          <button aria-label="Minimize design window"><svg width="12" height="12"><path d="M1 6.5H11" stroke="#000" /></svg></button>
          <button aria-label="Maximize design window"><svg width="12" height="12"><rect x="1.5" y="1.5" width="9" height="9" fill="none" stroke="#000" /></svg></button>
          <button aria-label="Close design window"><svg width="12" height="12"><path d="M1 1L11 11M11 1L1 11" stroke="#000" /></svg></button>
        </div>
      </header>
      <div class="rtabs">
        <button class="file">File</button><button class="home">Home</button><button class="vw">View</button>
        <svg width="10" height="10"><path d="M1 6L5 2L9 6V8H6L5 7L4 8H1Z" fill="none" stroke="#556" /></svg>
      </div>
      <div class="ribbon">
        <div class="grp g-set">
          <button class="plain"><span class="ibox"><Icon n="aa" :s="18" /></span>Settings<b class="dn"></b></button>
          <h3></h3>
        </div>
        <div class="grp g-code">
          <button class="plain"><span class="ibox"><Icon n="code" :s="18" /></span>Code and calculation<span>settings <b class="dn"></b></span></button>
          <h3></h3>
        </div>
        <div class="grp g-view">
          <div class="cols">
            <button class="bigb on w40"><Icon n="d2" :s="32" />2D</button>
            <button class="bigb w40"><Icon n="d3" :s="32" />3D</button>
            <button class="bigb w44"><Icon n="d3f" :s="32" /><span>3D<br />forces</span></button>
            <button class="bigb w50"><Icon n="dia" :s="32" />Diagram</button>
          </div>
          <h3>View</h3>
        </div>
        <div class="grp g-vs">
          <div class="cols">
            <button class="bigb on w46"><Icon n="rot" :s="32" /><span>Rotated<br />css</span></button>
            <button class="bigb on w48"><Icon n="out" :s="32" /><span>Results<br />outside</span></button>
          </div>
          <h3>View setting</h3>
        </div>
        <div v-for="g in kindGroups" :key="g.name" class="grp g-kind">
          <div class="rows">
            <div v-for="(r, i) in resultRows" :key="r" class="line">
              <button class="sb on"><Icon :n="g.i[i]" :s="16" />{{ r }}</button>
              <span class="pm"><button v-for="p in g.pm[i]" :key="p" :aria-label="r + (p[0] === 'p' ? ' larger' : ' smaller')"><Icon :n="p" :s="17" /></button></span>
            </div>
          </div>
          <h3>{{ g.name }}</h3>
        </div>
        <div v-for="g in labelGroups" :key="g.name" class="grp g-lab" :class="g.c">
          <div class="labs">
            <label v-for="(r, i) in resultRows" :key="r"><span>{{ r }}</span>
              <span class="combo rc"><select><option>{{ g.v[i] }}</option></select><i></i></span>
            </label>
          </div>
          <h3>{{ g.name }}</h3>
        </div>
        <div class="grp g-res">
          <div class="rows">
            <div class="line fs"><button v-for="f in ['Fc', 'Frt', 'Frc', 'Ftt', 'Ac']" :key="f" class="fb on">{{ f[0] }}<small>{{ f.slice(1) }}</small></button></div>
            <button class="sb"><Icon n="dxd" :s="15" />Dimension lines x, d</button>
            <button class="sb"><Icon n="dln" :s="15" />Dimension lines</button>
          </div>
          <h3>Resultant forces</h3>
        </div>
        <div class="grp g-cs">
          <div class="cols">
            <button class="bigb on w56"><Icon n="dims" :s="32" /><span>Dimension<br />lines</span></button>
            <div class="rows fib">
              <label class="line"><span>Fibre</span><span class="combo fc"><select><option>No Label</option></select><i></i></span></label>
              <button class="sb nm"><strong>1,2</strong>Bars numbers</button>
              <button class="sb nm"><strong>1,2</strong>Tendons numbers</button>
            </div>
            <div class="rows">
              <button v-for="u in ['u1', 'u2', 'u3']" :key="u" class="ub on" :aria-label="'Fibre option ' + u"><Icon :n="u" :s="18" /></button>
            </div>
            <div class="rows">
              <button v-for="u in ['sq1', 'sq2']" :key="u" class="ub" :aria-label="'Bar size ' + u"><Icon :n="u" :s="17" /></button>
            </div>
          </div>
          <h3>Cross-section</h3>
        </div>
        <div class="grp g-type">
          <div class="rows"><button class="sb t">Initials</button><button class="sb t">Increment</button><button class="sb t on">Total</button></div>
          <h3>Type of r...</h3>
        </div>
        <div class="grp g-calc">
          <div class="rows mid"><button class="sb"><Icon n="calc" :s="14" />Extreme</button><button class="sb on"><Icon n="calc" :s="14" />Section</button></div>
          <h3>Calculation</h3>
        </div>
      </div>

      <div class="body">
        <aside class="nav">
          <header class="ph dark"><h2>Navigator</h2><svg width="42" height="10"><path d="M0 3H8L4 7Z" fill="#fff" /><path d="M16 7H22M17 7V1H21V7M19 7V10" fill="none" stroke="#fff" /><path d="M33 1L41 9M41 1L33 9" stroke="#fff" stroke-width="1.5" /></svg></header>
          <div class="pick" v-for="p in [['Current Section', 'Bemessungsträger 1 - 3,56m'], ['Current Extreme', 'Phase 4 (36500,0d): CO4(7)(ULS)']]" :key="p[0]">
            <div class="ptop">
              <h3>{{ p[0] }}</h3>
              <button :aria-label="'Previous ' + p[0]"><svg width="12" height="12"><path d="M10 2V10L1 6Z" fill="#ffd000" stroke="#c89000" /></svg></button>
              <button :aria-label="'Next ' + p[0]"><svg width="12" height="12"><path d="M2 2V10L11 6Z" fill="#ffd000" stroke="#c89000" /></svg></button>
            </div>
            <span class="combo nc"><select :aria-label="p[0]"><option>{{ p[1] }}</option></select><i></i></span>
          </div>
          <div class="listrow">
            <div class="lists">
              <template v-for="(s, k) in sections" :key="k">
                <h3 class="sh"><span>{{ k ? 'Project Summary' : 'Current Section & Extreme' }}</span><svg width="9" height="10"><path d="M1 5L4.5 1.5L8 5M1 9L4.5 5.5L8 9" fill="none" stroke="#444" stroke-width="1.5" /></svg></h3>
                <ul><li v-for="x in s" :key="x"><a href="#" :class="{ on: x === 'Results' }">{{ x }}</a></li></ul>
              </template>
            </div>
            <div class="sb2 nv"><i class="up"></i><b></b><i class="down"></i></div>
          </div>
        </aside>

        <main class="doc">
          <div class="dtabs"><button>Main</button><svg width="28" height="10"><path d="M1 1.5H9" stroke="#222" /><path d="M1 5H9L5 9Z" fill="#222" /><path d="M18 1L26 9M26 1L18 9" stroke="#222" stroke-width="1.5" /></svg></div>
          <div class="sheet">
            <button class="fit" aria-label="Zoom to fit"><svg width="16" height="16"><path d="M1 5V1H5ZM11 1H15V5ZM15 11V15H11ZM5 15H1V11Z" fill="#666" /><path d="M2 2L6 6M14 2L10 6M2 14L6 10M14 14L10 10" stroke="#666" /></svg></button>
            <svg class="cross" viewBox="217 766 1114 395">
              <defs>
                <pattern id="hatch" width="9" height="8" patternUnits="userSpaceOnUse" patternTransform="skewX(-36)"><path d="M3 0V8" stroke="#7b68ee" stroke-width="1.4" /></pattern>
                <clipPath id="zone"><path d="M402 889L398 915L401 918.5H875L878 916L873 889Z" /></clipPath>
              </defs>
              <path :d="outline" fill="#f8f8d4" stroke="#333" stroke-width="1.3" />
              <g clip-path="url(#zone)">
                <path d="M380 889H900V919H380Z" fill="url(#hatch)" />
              </g>
              <path d="M402 889L398 915L401 918.5H875L878 916L873 889Z" fill="none" stroke="#7b68ee" />
              <path d="M402 889H873" stroke="#554aa8" stroke-width="1.5" />
              <circle v-for="c in cores" :key="c" :cx="c" cy="952" r="45.5" fill="#fff" stroke="#222" stroke-width="1.2" />
              <path v-for="c in cores" :key="'a' + c" :d="`M${c - 31} 918.5A45.5 45.5 0 0 1 ${c + 31} 918.5`" fill="none" stroke="#7b68ee" stroke-width="1.3" />
              <rect x="401" y="888" width="14" height="14" fill="#ff4500" />
              <circle v-for="s in strands" :key="s" :cx="s" cy="995.5" r="2.5" fill="#0000f0" />
              <circle cx="762.5" cy="995.5" r="2.2" fill="#f04040" stroke="#6030a0" />
              <g stroke="#111" fill="none">
                <path d="M637.5 863V1075M344 953.5H921" stroke-dasharray="8 3 2 3" />
                <path d="M632 892l11 12M643 892l-11 12M632 990l11 11M643 990l-11 11" />
                <path d="M295.5 883V1021M325.5 883V1021M380 1070.5H895M380 1100.5H895M380.5 1065V1107M895.5 1065V1107" stroke="#222" stroke-width="1.3" />
                <path d="M287 889.5H311M318 889.5H331M287 1015H311M318 1015H331" stroke="#444" />
                <path d="M291 884l9 10M321 884l9 10M291 1010l9 10M321 1010l9 10M321 948l9 11M376 1075l9-10M633 1075l9-10M891 1075l9-10M376 1105l9-10M891 1105l9-10" stroke-width="2" />
              </g>
              <path d="M331 954L344 950V957ZM634 1052H641L637.5 1067Z" />
              <g class="dim" text-anchor="middle">
                <text x="509" y="1064">592</text><text x="766" y="1064">593</text><text x="638" y="1095">1185</text><text x="645" y="1064">z</text>
                <text transform="translate(290 952) rotate(-90)">290</text><text transform="translate(320 920) rotate(-90)">149</text><text transform="translate(320 984) rotate(-90)">141</text>
              </g>
              <g stroke="#7b68ee" fill="none">
                <path d="M1041 889H1065L965 1015H1041Z" /><path d="M1041 889V1015M1040 1015H965M1041 889.5H1065" stroke-width="1.5" />
                <path v-for="l in strainLines" :key="l.y" :d="`M1041 ${l.y}.5H${l.x}`" />
                <path d="M1197 1015V889H1236L1197 918" /><path d="M1197 889.5H1236" stroke-width="2" />
                <path v-for="l in stressLines" :key="l.y" :d="`M1197 ${l.y}.5H${l.x - 2}`" />
              </g>
              <path d="M1032 993H1042V999H1032ZM1150 993H1198V999H1150Z" fill="#0000cd" />
              <g class="dim">
                <text x="965" y="880">ε [1e-4]</text><text x="1150" y="880">σ [MPa]</text>
                <g fill="#7b68ee"><text x="1064" y="894">-5,7</text><text x="1235" y="894">-14,6</text><text x="936" y="1020">18,9</text></g>
                <g fill="#0000cd"><text x="1004" y="1001">53,0</text><text x="1104" y="1001">1033,7</text></g>
              </g>
            </svg>
          </div>
        </main>

        <aside class="info">
          <header class="ph"><h2>Info</h2><svg width="42" height="10"><path d="M0 3H8L4 7Z" fill="#c8c090" /><path d="M16 7H22M17 7V1H21V7M19 7V10" fill="none" stroke="#b8b490" /><path d="M33 1L41 9M41 1L33 9" stroke="#c8c8a8" /></svg></header>
          <div class="listrow">
            <div class="cards">
              <h3 class="sh"><span>Project Data</span><svg width="9" height="10"><path d="M1 5L4.5 1.5L8 5M1 9L4.5 5.5L8 9" fill="none" stroke="#444" stroke-width="1.5" /></svg></h3>
              <div class="card one">
                <dl><template v-for="p in project" :key="p[0]"><dt>{{ p[0] }}</dt><dd>{{ p[1] }}</dd></template></dl>
                <div class="imp">Import status:<svg width="16" height="16"><circle cx="8" cy="8" r="7.5" fill="#5cc84a" /><path d="M4 8L7 11L12 5" fill="none" stroke="#fff" stroke-width="2.5" /></svg><button>Info...</button></div>
              </div>
              <h3 class="sh"><span>Current section and extreme</span><svg width="9" height="10"><path d="M1 5L4.5 1.5L8 5M1 9L4.5 5.5L8 9" fill="none" stroke="#444" stroke-width="1.5" /></svg></h3>
              <div class="card two">
                <dl><template v-for="p in current" :key="p[0]"><dt>{{ p[0] }}</dt><dd>{{ p[1] }}</dd></template></dl>
                <svg viewBox="1352 1024 214 76">
                  <path :d="outline" transform="translate(1267 761) scale(.312)" fill="#f8f8d4" stroke="#111" stroke-width="4" />
                  <circle v-for="c in [1415, 1449, 1483, 1517]" :key="c" :cx="c" cy="1058" r="14.5" fill="#fff" stroke="#222" stroke-width="1.2" />
                  <circle v-for="c in [1394, 1401, 1427, 1435, 1462, 1470, 1497, 1505, 1531, 1538]" :key="'s' + c" :cx="c" cy="1071.5" r="1" fill="#0000f0" />
                  <path d="M1465.5 1030V1093M1385 1058.5H1554" stroke="#111" stroke-dasharray="3 1" />
                  <path d="M1370 1058.5L1385 1055V1062ZM1462 1078H1469L1465.5 1094Z" />
                  <g class="mini"><text x="1362" y="1060">y</text><text x="1470" y="1090">z</text></g>
                </svg>
              </div>
              <h3 class="sh"><span>Current section check</span><svg width="9" height="10"><path d="M1 5L4.5 1.5L8 5M1 9L4.5 5.5L8 9" fill="none" stroke="#444" stroke-width="1.5" /></svg></h3>
            </div>
            <div class="sb2 iv"><i class="up"></i><b></b><i class="down"></i></div>
          </div>
        </aside>
      </div>
      <footer class="foot">Calculation duration: 0 min, 0 s, 0 ms</footer>
    </section>
  </div>
</template>

<style>
html, body { background: #d9d9d9; }
body { margin: 0; }
</style>

<style scoped>
.page { font: 11px/16px "Open Sans", "Noto Sans", sans-serif; color: #111; overflow: hidden; }
.page * { box-sizing: border-box; }
h1, h2, h3, ul, dl, dd { margin: 0; padding: 0; font: inherit; }
button, select, input { font: inherit; color: inherit; margin: 0; }
:deep(button) { padding: 0; border: 0; background: none; }
a { color: inherit; text-decoration: none; }
svg { flex: none; }
:deep(.ico) { display: block; flex: none; }

/* upper window */
.rfem { background: #cfd4dd; }
.title { display: flex; align-items: center; height: 30px; padding: 0 18px 0 8px; gap: 6px; background: #fff; }
.title h1 { flex: 1; }
.wctl { display: flex; gap: 34px; }
.wctl svg, .rfem button svg { display: block; }
.menu { display: flex; align-items: center; height: 24px; padding: 0 8px 0 1px; color: #4a4f5a; }
.menu a { margin-left: 15px; }
.menu > svg + a { margin-left: 9px; }
.menu u { text-underline-offset: 2px; }
.mdi { margin-left: auto; }
.grip { flex: none; width: 10px; height: 17px; background: radial-gradient(circle at 5px 2px, #9aa0ae 1px, transparent 2px) 0 0 / 10px 4px; }
.toolrow { display: flex; gap: 3px; }
.bar { display: flex; align-items: center; height: 26px; border-radius: 3px; background: linear-gradient(#eaedf6, #dfe3ed 50%, #c9cedb); border-bottom: 1px solid #aab0bd; }
.bar:first-child { padding-left: 1px; }
:deep(.tbtn) { width: 22px; height: 22px; display: grid; place-items: center; flex: none; border: 1px solid transparent; }
:deep(.tbtn.lit) { background: linear-gradient(#fde0a8, #fbb95a); border-color: #c08a40; border-radius: 2px; }
:deep(.tsep) { flex: none; width: 8px; height: 20px; background: linear-gradient(90deg, transparent 3px, #a9afbc 3px 4px, #fff 4px 5px, transparent 5px); }
.second :deep(.tsep) { width: 6px; }
:deep(.tdrop) { flex: none; width: 14px; height: 20px; position: relative; }
:deep(.tdrop)::after { content: ""; display: block; width: 0; margin: 0 auto; border: 3px solid transparent; border-top: 3px solid #555; border-bottom: 0; }
.combo { position: relative; display: block; flex: none; }
.combo select { display: block; width: 100%; height: 100%; appearance: none; border: 1px solid #a8a8a8; border-radius: 0; background: #fff; padding: 0 16px 0 4px; outline: 0; }
.combo i { position: absolute; right: 1px; top: 1px; bottom: 1px; width: 15px; background: linear-gradient(90deg, #eee, #ccc); border-left: 1px solid #b0b0b0; pointer-events: none; display: grid; place-items: center; }
.combo i::after { content: ""; border: 4px solid transparent; border-top: 5px solid #555; border-bottom: 0; }
.lc { width: 214px; height: 20px; margin: 0 2px; }
.lc select { border-color: #fff; }
.lc i { background: #e4e8f0; }
.lc i::after { border-width: 3px; border-bottom-width: 0; }

.work { display: flex; gap: 5px; padding: 1px 1px 2px; }
.project { width: 411px; flex: none; display: flex; flex-direction: column; }
.project > header { display: flex; align-items: center; gap: 8px; height: 19px; padding: 0 4px 0 4px; background: #b9bfcb; color: #444a55; }
.project h2 { flex: 1; }
.treebox { flex: 1 1 0; min-height: 0; display: flex; border: 1px solid #99a0ad; border-left: 3px solid #e6e9f0; border-right-width: 3px; border-right-color: #c4c9d4; background: #fcfcf4; overflow: hidden; }
.tree { flex: 1; min-width: 0; padding: 2px 0 0 2px; overflow: hidden; }
.node { display: flex; height: 18px; align-items: stretch; }
.cell { position: relative; width: 19px; flex: none; background: repeating-linear-gradient(#888 0 1px, transparent 1px 2px) 9px 0 / 1px 100% no-repeat; }
.cell.last { background-size: 1px 50%; }
.arm { position: absolute; left: 9px; top: 9px; width: 10px; height: 1px; background: repeating-linear-gradient(90deg, #888 0 1px, transparent 1px 2px); }
.exp { position: absolute; left: 5px; top: 5px; width: 9px; height: 9px; border: 1px solid #8a8f98; border-radius: 1px; background: linear-gradient(#2a4a90, #2a4a90) center / 5px 1px no-repeat, #fff; }
.exp.p { background: linear-gradient(#2a4a90, #2a4a90) center / 5px 1px no-repeat, linear-gradient(#2a4a90, #2a4a90) center / 1px 5px no-repeat, #fff; }
.node label { display: flex; align-items: center; white-space: nowrap; }
.ctl { width: 19px; display: flex; justify-content: center; }
.ctl input { appearance: none; width: 13px; height: 13px; border: 1px solid #444; background: #fff; }
.ctl input[type="radio"] { border-radius: 50%; background: radial-gradient(circle at 60% 60%, #fff, #dcdfe6); }
.ctl input[type="radio"]:checked { background: radial-gradient(#111 0 2px, #fff 3px); }
.ctl .part { background: linear-gradient(#999, #999) center / 7px 7px no-repeat #f0f2f6; }
.ctl .check { background: #fff url("data:image/svg+xml,%3Csvg xmlns='http://www.w3.org/2000/svg' viewBox='0 0 11 11'%3E%3Cpath d='M2 5L4 8L9 3' fill='none' stroke='%23000' stroke-width='2'/%3E%3C/svg%3E") center / 11px 11px no-repeat; }
.txt { padding-left: 4px; }
.txt small { font-size: 10px; line-height: 1; vertical-align: sub; }
.vscroll { width: 15px; flex: none; display: flex; flex-direction: column; align-items: center; padding: 6px 0 4px; background: #f0f0f0; }
.vscroll .thumb { width: 15px; flex: 1; margin: 60px 0 124px; background: #cdcdcd; }
.project > footer { display: flex; height: 23px; padding: 0 4px 2px; gap: 8px; color: #444a55; }
.project > footer button { display: flex; align-items: center; gap: 2px; padding: 1px 2px 0; }
.project > footer button.cur { background: #f4f7fa; border: 1px solid #aee0e8; border-top: 0; border-radius: 0 0 3px 3px; }
.view { flex: 1; min-width: 0; background: #fff; border: 2px solid #70757e; border-right: 0; border-bottom: 0; }
.view svg { display: block; width: 100%; overflow: visible; position: relative; z-index: 2; }
.vtext { font: 11px "Liberation Sans", Arial, sans-serif; fill: #000; }
.peak { font: 9px "Open Sans", sans-serif; fill: #f00000; }
.axis { font: 11px "Liberation Sans", sans-serif; }
.status { display: flex; align-items: center; height: 23px; padding: 2px 0 2px 5px; background: linear-gradient(#e4e6ec, #b0b5c0 40%, #a9aeba 70%, #c6c9d0); color: #333944; }
.status .wp { flex: 1; }
.status button { height: 18px; padding: 0 1px; margin-right: 3px; border: 1px solid #e8eaee; border-right-color: #999; border-bottom-color: #999; font-size: 12px; line-height: 15px; }
.status button.down { border: 1px solid #111; border-right-color: #f4f4f4; border-bottom-color: #f4f4f4; }
.status span + span { border-left: 1px solid #8d929d; padding-left: 2px; }
.cs { width: 189px; padding-left: 101px; white-space: nowrap; }
.pl { width: 88px; }
.xy { width: 75px; }
.zz { width: 92px; }

/* lower window */
.tendon { margin: 2px 8px 6px; background: #fff; font: 11px/14px "Liberation Sans", Arial, sans-serif; color: #111; }
.ttitle { display: flex; align-items: center; height: 26px; border-top: 1px solid #ccc; padding-right: 17px; }
.ttitle h1 { flex: none; font: 11px/14px Roboto, "Open Sans", sans-serif; }
.ttitle .wctl { flex: 1; justify-content: flex-end; }
.quick { flex: 1; display: flex; align-items: center; gap: 5px; }
.quick i { width: 1px; height: 12px; background: #888; }
.rtabs { display: flex; align-items: stretch; height: 24px; border-bottom: 1px solid #888c92; padding-right: 5px; }
.rtabs button { border: 1px solid #b4b8be; border-bottom: 0; border-radius: 3px 3px 0 0; }
.rtabs .file { width: 56px; background: linear-gradient(#f4f4f4, #cfcfcf); }
.rtabs .home { width: 66px; margin: 0 0 -1px 4px; background: #fff; }
.rtabs .vw { width: 74px; border-color: transparent; }
.rtabs svg { margin: 6px 0 0 auto; }
.ribbon { display: flex; height: 86px; background: linear-gradient(#fff 30%, #f4f5f7 75%, #e2e5e9); border-bottom: 2px solid #888d94; overflow: hidden; color: #333; white-space: nowrap; }
.grp { flex: none; display: flex; flex-direction: column; padding: 2px 2px 0; border-right: 1px solid #b4b8be; }
.grp > :first-child { height: 67px; flex: none; }
.grp h3 { line-height: 15px; color: #6a7280; text-align: center; }
.g-set { width: 49px; }
.g-code { width: 110px; }
.g-view { width: 179px; }
.g-vs { width: 100px; }
.g-kind { width: 150px; padding-right: 6px; }
.g-lab { padding-left: 3px; }
.g-lab.wide { width: 141px; }
.g-lab.slim { width: 131px; }
.g-res { width: 131px; }
.g-cs { width: 223px; }
.g-type { width: 65px; }
.g-calc { width: 80px; }
.g-lab label { display: flex; align-items: center; justify-content: space-between; height: 20px; }
.wide .rc { width: 65px; }
.slim .rc { width: 54px; }
.plain { display: flex; flex-direction: column; align-items: center; padding-top: 2px; }
.ibox { display: grid; place-items: center; width: 31px; height: 31px; border: 1px solid #c8ccd4; border-radius: 4px; background: #fff; margin-bottom: 4px; }
.dn { display: inline-block; border: 3px solid transparent; border-top: 4px solid #444; border-bottom: 0; vertical-align: middle; }
.plain > .dn { margin-top: 5px; }
.cols { display: flex; }
.bigb { display: flex; flex-direction: column; align-items: center; height: 66px; padding-top: 3px; border: 1px solid transparent; border-radius: 2px; text-align: center; }
.w40 { width: 40px; }
.w44 { width: 45px; }
.w50 { width: 49px; }
.w46 { width: 46px; }
.w48 { width: 49px; }
.w56 { width: 51px; }
.rows { display: flex; flex-direction: column; align-items: flex-start; }
.line { display: flex; align-items: center; width: 100%; height: 22px; }
.sb { display: flex; align-items: center; gap: 5px; height: 22px; padding: 0 5px 0 2px; border: 1px solid transparent; border-radius: 2px; }
.pm { display: flex; gap: 4px; margin-left: auto; }
.combo select { font-size: 11px; }
.rc { height: 20px; }
.rc select { padding-left: 1px; padding-right: 15px; }
.fb { width: 22px; height: 22px; border: 1px solid; border-radius: 2px; font: 700 12px/14px "Liberation Sans", sans-serif; color: #111; }
.fb small { font-size: 11px; }
.bigb.w56 { width: 57px; }
.fib { width: 117px; padding-left: 2px; }
.fib .line { padding-left: 3px; justify-content: space-between; }
.fc { width: 80px; height: 22px; }
.nm { padding: 0; gap: 4px; }
.ub { display: grid; place-items: center; width: 22px; height: 22px; border: 1px solid transparent; border-radius: 2px; }
.sb.t { padding-left: 3px; margin-left: 1px; }
.rows.mid { justify-content: center; padding-left: 5px; }
.on { background: linear-gradient(#f5c76c, #f9da84); border-color: #c8923c; }

.body { display: flex; padding-top: 5px; background: linear-gradient(#d4d6dc 0 5px, #fff 5px); }
.nav { width: 200px; flex: none; display: flex; flex-direction: column; border: 1px solid #a8a8a8; border-top: 0; margin-right: 6px; background: #fff; }
.ph { display: flex; align-items: center; justify-content: space-between; height: 18px; padding: 0 6px 0 2px; color: #444; }
.ph.dark { background: linear-gradient(#a8a8a8, #dcdcdc); padding-right: 5px; }
.ph h2 { font-size: 11px; }
.pick { padding: 2px 8px 8px; }
.ptop { display: flex; align-items: center; gap: 8px; height: 20px; margin-bottom: 2px; }
.ptop h3 { flex: 1; font-weight: 700; padding-bottom: 6px; }
.ptop button, .imp button { width: 26px; height: 20px; border: 1px solid #999; background: linear-gradient(#f8f8f8 45%, #ccc 50%, #e4e4e4); display: grid; place-items: center; }
.nc { height: 20px; }
.nc select { padding: 0 16px 0 2px; }
.listrow { flex: 1 1 0; min-height: 0; display: flex; overflow: hidden; }
.lists { flex: 1; min-width: 0; padding: 3px 11px 0 10px; overflow: hidden; }
.sh { display: flex; align-items: center; justify-content: space-between; height: 21px; padding: 0 6px; margin-bottom: 1px; font-weight: 700; background: linear-gradient(#e8e8e8, #cacaca); border-bottom: 1px solid #bbb; }
.sh span { width: 130px; overflow: hidden; white-space: nowrap; }
ul { list-style: none; border: 1px solid #b4b8c0; padding: 1px; margin-bottom: 5px; }
li a { display: block; height: 20px; line-height: 20px; padding-left: 10px; border-radius: 3px; white-space: nowrap; overflow: hidden; }
li a.on { background: #f6ca68; }
.sb2 { width: 17px; flex: none; display: flex; flex-direction: column; background: #f0f0f0; }
.sb2 i { height: 16px; border: 1px solid #b4bcc8; background: linear-gradient(90deg, #f4f4f6, #d8dade); display: grid; place-items: center; }
.sb2 i::after { content: ""; border: 4px solid transparent; border-top: 0; border-bottom: 4px solid #444; }
.sb2 i.down { margin-top: auto; }
.sb2 i.down::after { transform: rotate(180deg); }
.sb2 b { border: 1px solid #b0b8c4; border-radius: 2px; background: linear-gradient(90deg, #f2f2f2, #c8c8ca); }
.nv b { height: 145px; }
.iv b { height: 200px; }

.doc { flex: 1; min-width: 0; }
.dtabs { display: flex; height: 20px; align-items: center; justify-content: space-between; padding: 0 4px 0 12px; }
.dtabs button { width: 54px; height: 20px; border: 1px solid #c8c4bc; border-bottom: 0; border-radius: 8px 3px 0 0; font-weight: 700; background: #f6f5f2; }
.sheet { position: relative; border: 3px double #808080; border-radius: 4px; background: #fff; outline: 1px solid #d0ccc2; outline-offset: -2px; }
.fit { position: absolute; left: 5px; top: 4px; width: 24px; height: 24px; border: 1px solid #ccc; background: #eee; display: grid; place-items: center; }
.cross { display: block; width: 100%; }
.dim { font: 15px "Liberation Sans", sans-serif; }
.info { width: 250px; flex: none; display: flex; flex-direction: column; margin-left: 7px; border: 1px solid #b0b0b0; }
.info .ph { background: #f4f4f4; }
.cards { flex: 1; min-width: 0; padding: 6px 7px 0 8px; overflow: hidden; }
.cards .sh { margin-bottom: 0; }
.cards .sh span { width: auto; }
.card { border: 1px solid #a8acb8; margin-bottom: 8px; padding: 2px 0 0 1px; }
.card dl { display: grid; grid-template-columns: 102px 1fr; line-height: 14px; white-space: nowrap; overflow: hidden; }
.card.two dl { grid-template-columns: 82px 1fr; }
.card dd { overflow: hidden; }
.imp { display: flex; align-items: center; height: 21px; gap: 2px; }
.imp button { width: 49px; }
.card.two { padding-bottom: 34px; }
.card.two svg { display: block; width: 100%; margin-top: 40px; }
.mini { font: 13px "Liberation Sans", sans-serif; }
.foot { height: 30px; padding: 7px 3px 0; font: 11px/16px "Open Sans", sans-serif; }
</style>
